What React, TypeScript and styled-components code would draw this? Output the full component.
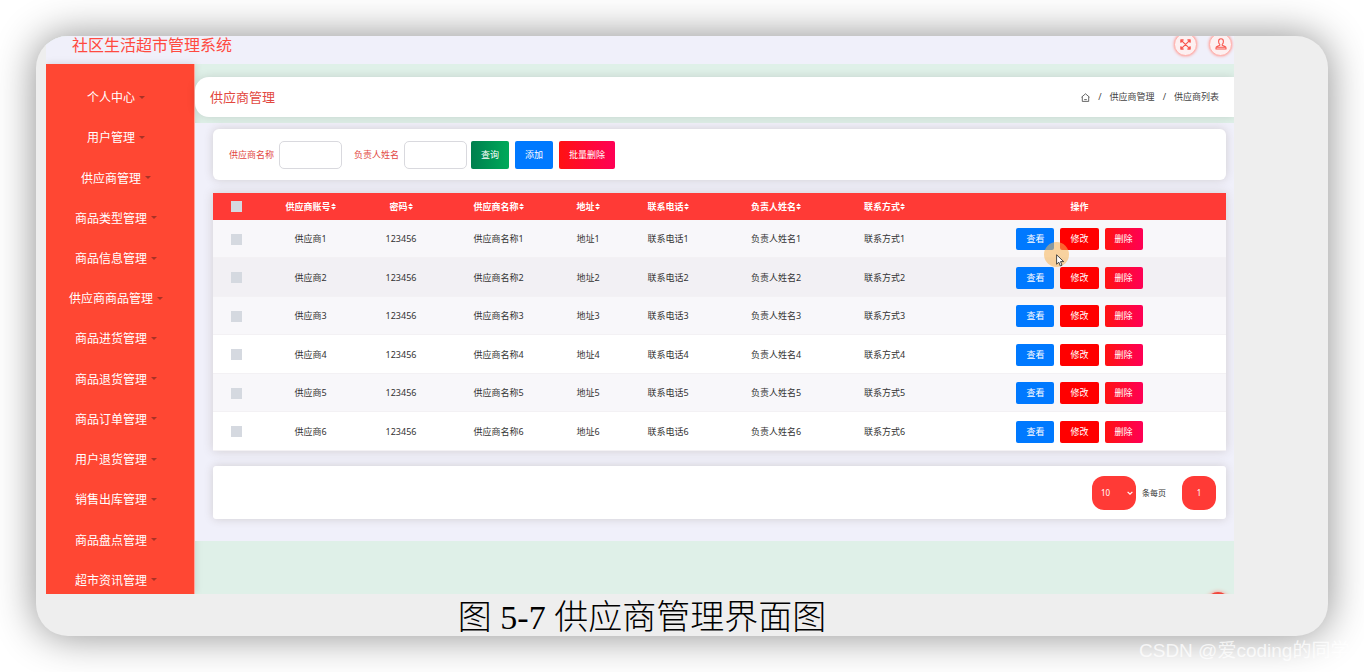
import React from "react";
import styled, { createGlobalStyle, css } from "styled-components";

const GlobalStyle = createGlobalStyle`
  * { box-sizing: border-box; }
  body {
    margin: 0;
    background: #fff;
    font-family: "Noto Sans", "Noto Sans CJK SC", sans-serif;
  }
  button, input, select { font-family: inherit; margin: 0; }
`;

const Page = styled.div`
  position: relative;
  padding: 36px;
  overflow: hidden;
`;

const Figure = styled.figure`
  margin: 0;
  background: #eee;
  border-radius: 32px;
  box-shadow: 0 0 40px rgba(0, 0, 0, 0.45);
`;

const Clip = styled.div`
  border-radius: 32px 32px 0 0;
  overflow: hidden;
  padding: 0 94px 0 10px;
`;

const Shot = styled.div`
  background: #dff0e8;
  overflow: hidden;
`;

const Caption = styled.figcaption`
  height: 42px;
  padding-right: 80px;
  line-height: 48px;
  text-align: center;
  font-family: "Liberation Serif", "Noto Sans CJK SC", serif;
  font-size: 34px;
  font-weight: 300;
  color: #000;
`;

const FigureNumber = styled.span`
  font-weight: 400;
`;

const TopBar = styled.header`
  display: flex;
  align-items: center;
  justify-content: space-between;
  height: 28px;
  padding: 0 2px 12px 26px;
  background: #f0f0fa;
`;

const SystemName = styled.h1`
  margin: 0;
  padding-top: 2px;
  font-size: 16px;
  line-height: 16px;
  font-weight: 400;
  color: #ff4a40;
`;

const TopActions = styled.div`
  display: flex;
  gap: 12px;
`;

const RoundButton = styled.button`
  display: grid;
  place-items: center;
  width: 23px;
  height: 23px;
  padding: 0;
  border: 1px solid #ffb3ae;
  border-radius: 50%;
  background: #fdf0f1;
  color: #f9564e;
  box-shadow: 0 0 3px #ff8f88;
`;

const Body = styled.div`
  display: flex;
`;

const Sidebar = styled.nav`
  display: flex;
  flex: 0 0 149px;
  flex-direction: column;
  padding-top: 14px;
  background: #ff4733;
  border-right: 1px solid #ffa79c;
  box-shadow: 0 0 8px rgba(0, 0, 0, 0.12);
`;

const Menu = styled.ul`
  display: grid;
  flex: 1;
  grid-auto-rows: 1fr;
  margin: 0 0 -7px;
  padding: 0 8px 0 0;
  list-style: none;
`;

const MenuItem = styled.li`
  display: flex;
`;

const MenuLink = styled.a`
  display: flex;
  flex: 1;
  align-items: center;
  justify-content: center;
  gap: 4px;
  font-size: 12px;
  line-height: 16px;
  color: #fff;
  text-decoration: none;

  &::after {
    content: "";
    margin-bottom: 2px;
    border: 3px solid transparent;
    border-top-color: #a83226;
    border-bottom: 0;
  }
`;

const Main = styled.main`
  display: flex;
  flex: 1;
  flex-direction: column;
  min-width: 0;
  padding-top: 13px;
`;

const PageHead = styled.div`
  display: flex;
  align-items: center;
  justify-content: space-between;
  height: 40px;
  margin-bottom: 6px;
  padding: 0 15px;
  border-radius: 14px 0 0 14px;
  background: #fff;
  box-shadow: 0 0 10px rgba(0, 0, 0, 0.12);
`;

const PageTitle = styled.h2`
  margin: 0;
  font-size: 13px;
  line-height: 18px;
  font-weight: 400;
  color: #e2483f;
`;

const Crumbs = styled.div`
  display: flex;
  align-items: center;
  gap: 8px;
  font-size: 9px;
  line-height: 12px;
  color: #444;
`;

const CrumbLink = styled.a`
  display: flex;
  color: inherit;
  text-decoration: none;
`;

const Workspace = styled.div`
  display: flex;
  flex-direction: column;
  padding: 6px 8px 22px 18px;
  background: #f0f0fa;
`;

const cardShadow = css`
  background: #fff;
  box-shadow: 0 0 10px rgba(70, 50, 30, 0.18);
`;

const FilterCard = styled.form`
  ${cardShadow}
  display: flex;
  align-items: center;
  height: 51px;
  margin-bottom: 13px;
  padding-left: 16px;
  border-radius: 6px;
`;

const Field = styled.label`
  display: flex;
  align-items: center;
  gap: 5px;
  margin-right: 12px;
  font-size: 9px;
  line-height: 12px;
  color: #e2483f;

  &:last-of-type {
    margin-right: 4px;
  }
`;

const TextInput = styled.input`
  width: 63px;
  height: 28px;
  padding: 0 6px;
  border: 1px solid #d9d9de;
  border-radius: 5px;
  background: #fff;
  font-size: 9px;
`;

type Tone = "search" | "primary" | "edit" | "danger";

const tones: Record<Tone, string> = {
  search: "linear-gradient(90deg, #007f4e, #00aa5a)",
  primary: "#0079ff",
  edit: "#ff0000",
  danger: "linear-gradient(90deg, #ff1212, #ff0055)",
};

const ActionButton = styled.button<{ $tone: Tone; $tall?: boolean }>`
  height: ${(p) => (p.$tall ? 28 : 22)}px;
  padding: 0 10px;
  border: 0;
  border-radius: 2px;
  background: ${(p) => tones[p.$tone]};
  color: #fff;
  font-size: 9px;
  line-height: 12px;
`;

const ButtonRow = styled.div`
  display: flex;
  justify-content: center;
  gap: 6px;
`;

const TableCard = styled.div`
  ${cardShadow}
  position: relative;
  margin-bottom: 15px;
`;

const Table = styled.table`
  width: 100%;
  height: 258px;
  table-layout: fixed;
  border-collapse: collapse;
  font-size: 9px;
  line-height: 12px;
  color: #333;
  text-align: center;
`;

const HeadRow = styled.tr`
  height: 27px;
  background: #ff3a36;
  color: #fff;
`;

const BodyRow = styled.tr<{ $hovered?: boolean }>`
  border-bottom: 1px solid #f3f1f4;
  background: #fff;

  &:nth-child(odd) {
    background: #f8f7fa;
  }

  ${(p) => p.$hovered && css`background: #f2f0f4;`}
`;

const Col = styled.col<{ $w?: number }>`
  width: ${(p) => (p.$w ? `${p.$w}px` : "auto")};
`;

const Th = styled.th`
  padding: 0;
  font-weight: 700;
`;

const Td = styled.td`
  padding: 1px 0 0;
`;

const SortLabel = styled.span`
  display: inline-flex;
  align-items: center;
`;

const CheckBox = styled.input`
  appearance: none;
  display: block;
  width: 11px;
  height: 11px;
  margin: 0 auto;
  background: #d5d9e0;
`;

const Pointer = styled.div`
  position: absolute;
  top: 49px;
  right: 157px;
  width: 25px;
  height: 25px;
  border-radius: 50%;
  background: rgba(247, 180, 84, 0.55);
  pointer-events: none;

  svg {
    position: absolute;
    top: 12px;
    left: 12px;
  }
`;

const PagerCard = styled.div`
  ${cardShadow}
  display: flex;
  align-items: center;
  justify-content: flex-end;
  height: 53px;
  padding-right: 10px;
  border-radius: 3px;
`;

const PageSize = styled.label`
  display: flex;
  align-items: center;
  gap: 6px;
  margin-right: 16px;
  font-size: 8px;
  line-height: 12px;
  color: #333;
`;

const SelectWrap = styled.span`
  position: relative;
  display: flex;

  svg {
    position: absolute;
    top: 14px;
    right: 3px;
    pointer-events: none;
  }
`;

const Select = styled.select`
  appearance: none;
  width: 44px;
  height: 34px;
  padding: 0 9px;
  border: 0;
  border-radius: 12px;
  background: #ff3a36;
  color: #fff;
  font-size: 8px;
`;

const PageButton = styled.button`
  width: 34px;
  height: 34px;
  padding: 0;
  border: 0;
  border-radius: 12px;
  background: #ff3a36;
  color: #fff;
  font-size: 8px;
`;

const Foot = styled.div`
  position: relative;
  height: 53px;
  overflow: hidden;
`;

const BackToTop = styled.button`
  position: absolute;
  right: 4px;
  bottom: -22px;
  width: 24px;
  height: 24px;
  padding: 0;
  border: 0;
  border-radius: 50%;
  background: #f0463b;
  box-shadow: 0 0 4px #ff8f88;
`;

const Watermark = styled.div`
  position: absolute;
  right: 0;
  bottom: 7px;
  width: 225px;
  font-family: "Liberation Sans", "Noto Sans CJK SC", sans-serif;
  font-size: 19px;
  line-height: 28px;
  white-space: nowrap;
  color: rgba(255, 255, 255, 0.75);
`;

const ExpandIcon = () => (
  <svg width="11" height="11" viewBox="0 0 11 11" fill="none" stroke="currentColor" strokeWidth="1.2">
    <path d="M1 3.8V1h2.8M7.2 1H10v2.8M10 7.2V10H7.2M3.8 10H1V7.2M1.3 1.3l8.4 8.4M9.7 1.3 1.3 9.7" />
    <path d="M.6.6h2.800L.6 3.400zM10.400.6v2.800L7.600.6zM10.400 10.400H7.600l2.800-2.800zM.6 10.400V7.600l2.800 2.800z" fill="currentColor" stroke="none" />
  </svg>
);

const UserIcon = () => (
  <svg width="12" height="12" viewBox="0 0 12 12" fill="none" stroke="currentColor" strokeWidth="1.1" strokeLinejoin="round">
    <path d="M6 .8c1.600 0 2.400 1.100 2.400 2.700 0 1.300-.4 2.200-1.200 2.900v.9l2.800 1.200c.7.3 1 .9 1 1.600v.9H1v-.9c0-.7.3-1.300 1-1.600l2.800-1.200v-.9C4 5.700 3.600 4.800 3.600 3.500 3.600 1.900 4.400.8 6 .8zM1.800 9.200h8.400" />
  </svg>
);

const HomeIcon = () => (
  <svg width="9" height="9" viewBox="0 0 9 9" fill="none" stroke="currentColor" strokeWidth="0.8" strokeLinejoin="round">
    <path d="M.5 4.200 4.500.8l4 3.400M1.300 3.700v4.700h6.400V3.700M3.200 6.600h2.600" />
  </svg>
);

const SortIcon = () => (
  <svg width="5" height="7" viewBox="0 0 5 7" fill="currentColor">
    <path d="M0 3 2.500.3 5 3zM0 4l2.500 2.700L5 4z" />
  </svg>
);

const ChevronIcon = () => (
  <svg width="6" height="6" viewBox="0 0 6 6" fill="none" stroke="#fff" strokeWidth="1.2">
    <path d="M.6 1.800 3 4.200l2.400-2.400" />
  </svg>
);

const ArrowIcon = () => (
  <svg width="9" height="13" viewBox="0 0 9 13" fill="#fff" stroke="#333" strokeWidth="0.9" strokeLinejoin="round">
    <path d="M.6.8v9.400l2.200-2 1.500 3.700 1.700-.7-1.500-3.600h3.200z" />
  </svg>
);

const menu = [
  "个人中心", "用户管理", "供应商管理", "商品类型管理", "商品信息管理",
  "供应商商品管理", "商品进货管理", "商品退货管理", "商品订单管理",
  "用户退货管理", "销售出库管理", "商品盘点管理", "超市资讯管理",
];

const columns = [
  { label: "供应商账号", width: 101 },
  { label: "密码", width: 80 },
  { label: "供应商名称", width: 115 },
  { label: "地址", width: 64 },
  { label: "联系电话", width: 96 },
  { label: "负责人姓名", width: 120 },
  { label: "联系方式", width: 97 },
];

const suppliers = [1, 2, 3, 4, 5, 6].map((n) => [
  `供应商${n}`, "123456", `供应商名称${n}`, `地址${n}`,
  `联系电话${n}`, `负责人姓名${n}`, `联系方式${n}`,
]);

export default function App() {
  return (
    <Page>
      <GlobalStyle />
      <Figure>
        <Clip>
          <Shot>
            <TopBar>
              <SystemName>社区生活超市管理系统</SystemName>
              <TopActions>
                <RoundButton type="button" aria-label="全屏"><ExpandIcon /></RoundButton>
                <RoundButton type="button" aria-label="用户"><UserIcon /></RoundButton>
              </TopActions>
            </TopBar>
            <Body>
              <Sidebar>
                <Menu>
                  {menu.map((m) => (
                    <MenuItem key={m}><MenuLink href="#">{m}</MenuLink></MenuItem>
                  ))}
                </Menu>
              </Sidebar>
              <Main>
                <PageHead>
                  <PageTitle>供应商管理</PageTitle>
                  <Crumbs>
                    <CrumbLink href="#" aria-label="首页"><HomeIcon /></CrumbLink>
                    <span>/</span>
                    <CrumbLink href="#">供应商管理</CrumbLink>
                    <span>/</span>
                    <span>供应商列表</span>
                  </Crumbs>
                </PageHead>
                <Workspace>
                  <FilterCard onSubmit={(e) => e.preventDefault()}>
                    <Field>供应商名称<TextInput type="text" /></Field>
                    <Field>负责人姓名<TextInput type="text" /></Field>
                    <ButtonRow>
                      <ActionButton $tone="search" $tall>查询</ActionButton>
                      <ActionButton type="button" $tone="primary" $tall>添加</ActionButton>
                      <ActionButton type="button" $tone="danger" $tall>批量删除</ActionButton>
                    </ButtonRow>
                  </FilterCard>
                  <TableCard>
                    <Table>
                      <colgroup>
                        <Col $w={47} />
                        {columns.map((c) => <Col key={c.label} $w={c.width} />)}
                        <Col />
                      </colgroup>
                      <thead>
                        <HeadRow>
                          <Th><CheckBox type="checkbox" aria-label="全选" /></Th>
                          {columns.map((c) => (
                            <Th key={c.label}><SortLabel>{c.label}<SortIcon /></SortLabel></Th>
                          ))}
                          <Th>操作</Th>
                        </HeadRow>
                      </thead>
                      <tbody>
                        {suppliers.map((row, i) => (
                          <BodyRow key={row[0]} $hovered={i === 1}>
                            <Td><CheckBox type="checkbox" aria-label={row[0]} /></Td>
                            {row.map((value, c) => <Td key={c}>{value}</Td>)}
                            <Td>
                              <ButtonRow>
                                <ActionButton type="button" $tone="primary">查看</ActionButton>
                                <ActionButton type="button" $tone="edit">修改</ActionButton>
                                <ActionButton type="button" $tone="danger">删除</ActionButton>
                              </ButtonRow>
                            </Td>
                          </BodyRow>
                        ))}
                      </tbody>
                    </Table>
                    <Pointer><ArrowIcon /></Pointer>
                  </TableCard>
                  <PagerCard>
                    <PageSize>
                      <SelectWrap>
                        <Select defaultValue="10"><option>10</option></Select>
                        <ChevronIcon />
                      </SelectWrap>
                      条每页
                    </PageSize>
                    <PageButton type="button">1</PageButton>
                  </PagerCard>
                </Workspace>
                <Foot><BackToTop type="button" aria-label="返回顶部" /></Foot>
              </Main>
            </Body>
          </Shot>
        </Clip>
        <Caption>图 <FigureNumber>5-7</FigureNumber> 供应商管理界面图</Caption>
      </Figure>
      <Watermark>CSDN @爱coding的同学</Watermark>
    </Page>
  );
}
